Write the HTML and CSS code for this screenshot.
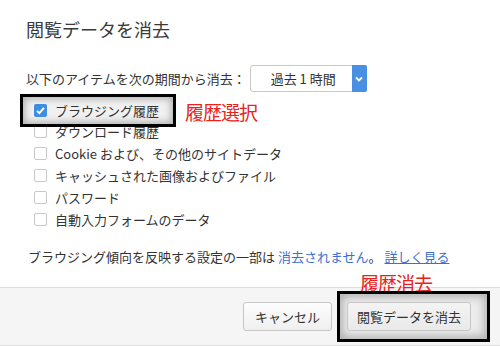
FILE: index.html
```html
<!DOCTYPE html>
<html>
<head>
    <title>閲覧データを消去</title>
    <meta charset="UTF-8">
    <meta name="viewport" content="width=device-width, initial-scale=1.0">
    <link rel="stylesheet" href="styles.css">
</head>
<body>
    <div class="dialog">
        <div class="content">
            <h1 class="title">閲覧データを消去</h1>

            <div class="period">
                <span>以下のアイテムを次の期間から消去：</span>
                <div class="select">
                    <span class="select-text">過去 1 時間</span>
                    <span class="select-arrow">
                        <svg width="8" height="6" viewBox="0 0 8 6"><path d="M1 1.5 L4 4.5 L7 1.5" fill="none" stroke="#fff" stroke-width="1.8"/></svg>
                    </span>
                </div>
            </div>

            <ul class="options">
                <li class="row marked">
                    <span class="check checked">
                        <svg width="11" height="11" viewBox="0 0 11 11"><path d="M2 5.8 L4.4 8.2 L9 2.8" fill="none" stroke="#fff" stroke-width="1.9"/></svg>
                    </span>
                    ブラウジング履歴
                    <span class="note-red note-select">履歴選択</span>
                </li>
                <li class="row row-under"><span class="check"></span>ダウンロード履歴</li>
                <li class="row"><span class="check"></span>Cookie および、その他のサイトデータ</li>
                <li class="row"><span class="check"></span>キャッシュされた画像およびファイル</li>
                <li class="row"><span class="check"></span>パスワード</li>
                <li class="row"><span class="check"></span>自動入力フォームのデータ</li>
            </ul>

            <p class="info">ブラウジング傾向を反映する設定の一部は <a class="link">消去されません</a>。 <a class="link more">詳しく見る</a></p>
        </div>

        <div class="footer">
            <span class="note-red note-clear">履歴消去</span>
            <button class="btn">キャンセル</button>
            <div class="marked-btn">
                <button class="btn btn-clear">閲覧データを消去</button>
            </div>
        </div>
    </div>
</body>
</html>
```

FILE: styles.css
```css
body {
    margin: 0;
    background-color: #fff;
    font-family: 'Noto Sans CJK JP', 'Liberation Sans', sans-serif;
    color: #333;
    font-size: 13px;
}
.dialog {
    width: 500px;
    height: 347px;
    display: flex;
    flex-direction: column;
}
.content {
    position: relative;
    height: 270px;
    padding: 17px 26px 0 26px;
}
.title {
    margin: 0;
    font-size: 18px;
    font-weight: normal;
    line-height: 24px;
    color: #3a3a3a;
}
.period {
    display: flex;
    align-items: center;
    gap: 4px;
    margin-top: 24px;
    height: 27px;
}
.select {
    display: flex;
    width: 117px;
    height: 27px;
    box-sizing: border-box;
    border: 1px solid #c9c9c9;
    border-radius: 3px;
    background: #fff;
}
.select-text {
    flex: 1;
    padding-left: 20px;
    line-height: 25px;
}
.select-arrow {
    width: 15px;
    display: flex;
    align-items: center;
    justify-content: center;
    background-color: #4a90e2;
    border-radius: 0 2px 2px 0;
    margin: -1px -1px -1px 0;
}
.options {
    list-style: none;
    margin: 7px 0 0 0;
    padding: 0 0 0 8px;
}
.row {
    display: flex;
    align-items: center;
    gap: 8px;
    height: 22px;
}
.row-under {
    margin-top: -1px;
}
.check {
    width: 13px;
    height: 13px;
    box-sizing: border-box;
    border: 1px solid #c8c8c8;
    border-radius: 2px;
    background: #fff;
    display: flex;
    align-items: center;
    justify-content: center;
}
.check.checked {
    border: none;
    background-color: #3d8ee0;
}
/* 注釈の枠 */
.marked {
    position: relative;
    z-index: 1;
}
.marked::before {
    content: "";
    position: absolute;
    left: -14px;
    top: -5px;
    width: 156px;
    height: 33px;
    box-sizing: border-box;
    border: 3px solid #000;
    background: #f1f1f1;
    box-shadow: inset 0 0 7px 2px rgba(0,0,0,0.28);
    z-index: -1;
}
.note-red {
    position: absolute;
    color: #e8231b;
    font-size: 19px;
    letter-spacing: -1px;
    line-height: 22px;
}
.note-select {
    left: 151px;
    top: 2px;
}
.info {
    margin: 17px 0 0 2px;
    line-height: 20px;
}
.link {
    color: #3c6fd0;
}
.link.more {
    text-decoration: underline;
}
.footer {
    position: relative;
    flex: 1;
    display: flex;
    justify-content: flex-end;
    align-items: flex-start;
    gap: 15px;
    padding: 14px 29px 0 0;
    background-color: #f5f5f5;
    border-top: 1px solid #dcdcdc;
    border-bottom: 1px solid #e2e2e2;
    margin-bottom: 1px;
}
.note-clear {
    right: 68px;
    top: -16px;
}
.btn {
    height: 29px;
    padding: 0 11px;
    font-family: inherit;
    font-size: 13px;
    color: #333;
    background: linear-gradient(#fdfdfd, #efefef);
    border: 1px solid #c6c6c6;
    border-radius: 3px;
}
.marked-btn {
    position: relative;
}
.marked-btn::before {
    content: "";
    position: absolute;
    left: -10px;
    top: -11px;
    width: 153px;
    height: 51px;
    box-sizing: border-box;
    border: 3px solid #000;
    background: #ececec;
    box-shadow: inset 0 0 8px 3px rgba(0,0,0,0.25);
}
.btn-clear {
    position: relative;
    width: 124px;
    padding: 0;
    background: linear-gradient(#f4f4f4, #e9e9e9);
}
```
